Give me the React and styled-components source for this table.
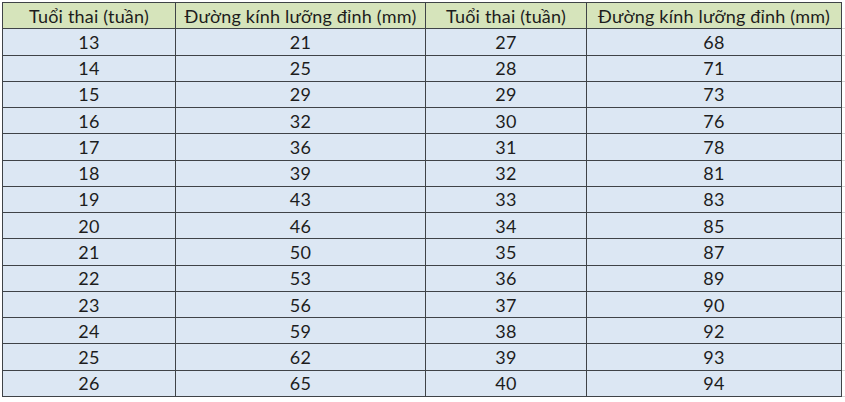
import React from 'react';
import styled, { createGlobalStyle } from 'styled-components';

const GlobalStyle = createGlobalStyle`
  html, body {
    margin: 0;
    padding: 0;
    background: #ffffff;
  }
  body {
    font-family: Lato, "Noto Sans", "Liberation Sans", sans-serif;
  }
`;

const Sheet = styled.div`
  width: 845px;
  height: 402px;
  overflow: hidden;
  padding: 2px 0 0 2px;
  box-sizing: border-box;
  background: #fff;
`;

const Table = styled.table`
  border-collapse: collapse;
  table-layout: fixed;
  width: 847px;
`;

const Row = styled.tr`
  height: 26.27px;
`;

const Cell = styled.td`
  border: 1.4px solid #3f4347;
  background: ${p => (p.$head ? '#d6e4bb' : '#dce7f3')};
  color: #1d1d1d;
  font-size: 18px;
  letter-spacing: 0.2px;
  text-align: center;
  vertical-align: middle;
  padding: 0;
  white-space: nowrap;
  overflow: hidden;
  line-height: 1;
`;

const Gutter = styled.td`
  border-bottom: 1px solid #d4d4d4;
  background: #fff;
  padding: 0;
`;

const widths = [173, 250, 161, 255, 8];

const left = [
  [13, 21], [14, 25], [15, 29], [16, 32], [17, 36], [18, 39], [19, 43],
  [20, 46], [21, 50], [22, 53], [23, 56], [24, 59], [25, 62], [26, 65],
];
const right = [
  [27, 68], [28, 71], [29, 73], [30, 76], [31, 78], [32, 81], [33, 83],
  [34, 85], [35, 87], [36, 89], [37, 90], [38, 92], [39, 93], [40, 94],
];

export default function App() {
  return (
    <>
      <GlobalStyle />
      <Sheet>
        <Table>
          <colgroup>
            {widths.map((w, i) => (
              <col key={i} style={{ width: w }} />
            ))}
          </colgroup>
          <tbody>
            <Row>
              <Cell $head>Tuổi thai (tuần)</Cell>
              <Cell $head>Đường kính lưỡng đỉnh (mm)</Cell>
              <Cell $head>Tuổi thai (tuần)</Cell>
              <Cell $head>Đường kính lưỡng đỉnh (mm)</Cell>
              <Gutter />
            </Row>
            {left.map((l, i) => (
              <Row key={i}>
                <Cell>{l[0]}</Cell>
                <Cell>{l[1]}</Cell>
                <Cell>{right[i][0]}</Cell>
                <Cell>{right[i][1]}</Cell>
                <Gutter />
              </Row>
            ))}
          </tbody>
        </Table>
      </Sheet>
    </>
  );
}
